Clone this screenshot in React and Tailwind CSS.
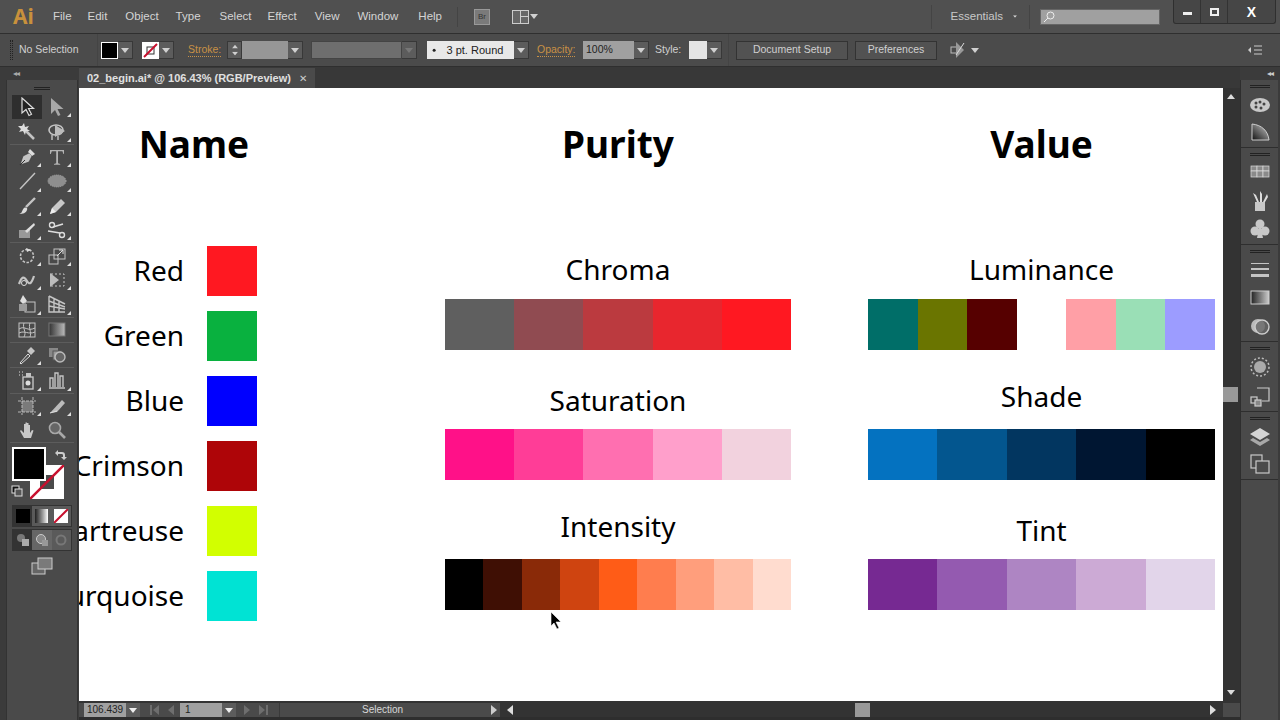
const G = "#c4c4c4";

function Caret({ className = "", color = "#d0d0d0" }) {
  return (
    <svg width="8" height="5" viewBox="0 0 8 5" className={className}>
      <path d="M0 0h8L4 5z" fill={color} />
    </svg>
  );
}

// little square + arrow dropdown next to the control bar fields
function Drop({ w = "w-[15px]", dim = false }) {
  return (
    <div className={`${w} h-[18px] flex items-center justify-center bg-[#5c5c5c] border border-[#383838] border-l-0`}>
      <Caret color={dim ? "#777" : "#d0d0d0"} />
    </div>
  );
}

const toolIcons = {
  select: <path d="M5 1v15l4-3.5 3 6 2.5-1.2-3-5.8h5z" fill="#222" stroke="#ddd" strokeWidth="1.2" />,
  direct: <path d="M4 1v16l4-4 3 6 2.500-1-3-6h6z" fill="#a8a8a8" />,
  wand: <g><path d="M9 9l8 8" stroke={G} strokeWidth="2.5" /><path d="M7 1l1 4 4-1-2 3 3 2-4 0-1 4-2-4-4 1 2-3-3-3 4 0z" fill="#ddd" /></g>,
  lasso: <g><ellipse cx="9" cy="8" rx="7" ry="5" fill="none" stroke={G} strokeWidth="1.6" /><path d="M8 3l10 6-10 6z" fill="#bbb" /><path d="M5 13v5M11 14v4" stroke={G} strokeWidth="1.4" /></g>,
  pen: <g><path d="M3 18l3-9 6-3 3 3-3 6z" fill={G} stroke="#333" strokeWidth=".6" /><path d="M11 5l2-3 5 5-3 2z" fill="#ddd" /><path d="M3 18l5-5" stroke="#333" /></g>,
  type: <path d="M3 3h14v4h-.6l-1-2.800h-4.400v12l2.200.8v.8H7v-.8l2.200-.8v-12H4.800l-1 2.800H3z" fill="#b4b4b4" />,
  line: <path d="M3 18L18 2" stroke={G} strokeWidth="1.4" />,
  ellipse: <ellipse cx="10" cy="10" rx="9" ry="6" fill="#8e8e8e" stroke="#aaa" strokeDasharray="1 1" />,
  brush: <g><path d="M9 11L18 2" stroke={G} strokeWidth="2.4" /><path d="M2 18c3 0 3-4 5-6 2-1 4 0 3 2-1 3-4 4-8 4z" fill="#ddd" /></g>,
  pencil: <g><path d="M3 18l2-6 9-9 4 4-9 9z" fill="#c8c8c8" /><path d="M3 18l2-6 4 4z" fill="#eee" /></g>,
  blob: <g><path d="M2 10h11v8H2z" fill="#999" /><path d="M8 11l9-8 1 2-8 8z" fill="#ddd" /></g>,
  scissors: <g><circle cx="5" cy="5" r="2.500" fill="none" stroke="#ddd" strokeWidth="1.4" /><circle cx="15" cy="15" r="2.500" fill="none" stroke="#ddd" strokeWidth="1.4" /><path d="M6 7l10-3M1 11l12 2" stroke="#ddd" strokeWidth="1.6" /></g>,
  rotate: <g><circle cx="10" cy="10" r="6.500" fill="none" stroke={G} strokeWidth="1.6" strokeDasharray="2.500 1.500" /><path d="M9 2l5 2-4 2z" fill="#ddd" /></g>,
  scale: <g><rect x="2" y="9" width="9" height="9" fill="none" stroke={G} /><rect x="7" y="3" width="11" height="10" fill="none" stroke={G} /><path d="M10 10l6-6M12 4h4v4" fill="none" stroke="#ddd" /></g>,
  warp: <g><path d="M2 14c3-8 5-8 8-3s5 1 7-5" fill="none" stroke={G} strokeWidth="2.2" /><circle cx="7" cy="13" r="2.500" fill="#444" stroke="#ddd" /></g>,
  free: <g><rect x="4" y="4" width="13" height="12" fill="none" stroke={G} strokeDasharray="2 2" /><path d="M3 3l9 7-9 7z" fill="#bbb" /></g>,
  shape: <g><rect x="8" y="8" width="10" height="10" fill="none" stroke={G} /><rect x="2" y="10" width="8" height="7" fill="#999" /><path d="M6 1l4 6-4 3-3-3z" fill="#ddd" /></g>,
  grid: <path d="M2 2v16h16M2 2l16 8M2 7l16 6M2 12l16 3M7 4v14M12 7v11" fill="none" stroke={G} strokeWidth="1.4" />,
  mesh: <g><rect x="2" y="3" width="16" height="14" fill="none" stroke={G} /><path d="M2 9c6-4 8 3 16-1M2 13c6-3 9 2 16-1M7 3c-2 5 3 9 0 14M13 3c-2 5 2 9 0 14" fill="none" stroke={G} /></g>,
  gradient: <g><defs><linearGradient id="tg"><stop offset="0" stopColor="#333" /><stop offset="1" stopColor="#bbb" /></linearGradient></defs><rect x="2" y="3" width="16" height="13" fill="url(#tg)" stroke="#777" /></g>,
  dropper: <g><path d="M3 18l8-9 2 2-9 8z" fill="none" stroke="#ddd" /><path d="M10 6l4-4 4 4-4 4z" fill={G} /></g>,
  blend: <g><rect x="2" y="3" width="9" height="9" fill="#888" /><rect x="6" y="6" width="9" height="9" fill="#999" stroke="#555" /><circle cx="13" cy="12" r="5" fill="#666" stroke="#bbb" strokeWidth="1.4" /></g>,
  spray: <g><rect x="6" y="7" width="10" height="12" fill="none" stroke={G} strokeWidth="1.4" /><circle cx="11" cy="13" r="2.500" fill="#ddd" /><rect x="9" y="3" width="5" height="4" fill={G} /><path d="M2 2h1M5 2h1M2 5h1M5 5h1" stroke="#ddd" /></g>,
  graph: <path d="M2 18h16M3 17V8h3v9M8 17V3h3v14M13 17V6h3v11" fill="none" stroke={G} strokeWidth="1.4" />,
  artboard: <g><rect x="5" y="5" width="11" height="11" fill="#7a7a7a" /><path d="M1 5h18M1 16h18M5 1v18M16 1v18" stroke={G} strokeWidth=".9" strokeDasharray="3 1" fill="none" /></g>,
  slice: <g><path d="M3 17L15 4l3 3-8 9z" fill="#bbb" /><path d="M3 17l7-2" stroke="#ddd" /></g>,
  hand: <path d="M7 18L3 11l1-1 3 3V4h1.500v6V2.500H10V10V3h1.500v7V5H13v8l2-3 1.500.5-2.500 7.500z" fill="#c8c8c8" />,
  zoom: <g><circle cx="8" cy="8" r="5.500" fill="#666" stroke="#a8a8a8" strokeWidth="1.6" /><path d="M12 12l6 6" stroke="#a8a8a8" strokeWidth="2.6" /></g>,
};

const toolGroups = [
  [["select", "direct"], ["wand", "lasso"]],
  [["pen", "type"], ["line", "ellipse"], ["brush", "pencil"], ["blob", "scissors"]],
  [["rotate", "scale"], ["warp", "free"], ["shape", "grid"]],
  [["mesh", "gradient"]],
  [["dropper", "blend"]],
  [["spray", "graph"]],
  [["artboard", "slice"], ["hand", "zoom"]],
];

const noFlyout = ["select", "wand", "mesh", "gradient", "zoom", "blend", "hand"];

function Tool({ name }) {
  const active = name === "select";
  return (
    <div className={`relative flex-1 h-full flex items-center justify-center ${active ? "bg-[#2e2e2e]" : ""}`}>
      <svg width="20" height="20" viewBox="0 0 20 20">{toolIcons[name]}</svg>
      {!noFlyout.includes(name) && (
        <svg width="4" height="4" viewBox="0 0 4 4" className="absolute right-[1px] bottom-[2px]">
          <path d="M4 0v4H0z" fill="#ddd" />
        </svg>
      )}
    </div>
  );
}

function LeftTools() {
  return (
    <div className="w-[79px] shrink-0 flex flex-col bg-[#3b3b3b] pl-[6px] pr-[1px]">
      <div className="h-[13px] flex items-center pl-[7px]">
        <span className="text-[#aaa] text-[8px] leading-none tracking-[-1px]">◂◂</span>
      </div>
      <div className="flex-1 bg-[#4a4a4a] border-x border-[#333] flex flex-col pt-[2px]">
        <div className="h-[13px] flex justify-center items-center">
          <div className="w-[16px] h-[3px] border-y border-[#222]"></div>
        </div>
        {toolGroups.map((group, i) => (
          <div key={i} className="border-b border-[#5c5c5c] mx-[3px]">
            {group.map((row) => (
              <div key={row[0]} className="flex h-[24.400px] px-[2px]">
                <Tool name={row[0]} />
                <Tool name={row[1]} />
              </div>
            ))}
          </div>
        ))}

        {/* fill and stroke */}
        <div className="relative h-[62px] shrink-0">
          <div className="absolute left-[5px] top-[4px] w-[34px] h-[34px] bg-black border-2 border-white z-10"></div>
          <div className="absolute left-[23px] top-[22px] w-[34px] h-[34px] bg-white overflow-hidden">
            <div className="absolute left-[10px] top-[10px] w-[14px] h-[14px] bg-[#4a4a4a]"></div>
            <svg width="34" height="34" viewBox="0 0 34 34" className="absolute left-0 top-0">
              <path d="M0 34L34 0" stroke="#c8102e" strokeWidth="2.500" />
            </svg>
          </div>
          <svg width="14" height="14" viewBox="0 0 14 14" className="absolute left-[46px] top-[5px]">
            <path d="M2 5l3-3v2h4c2 0 3 1 3 3v2h2l-3 3-3-3h2V7c0-1-1-1-2-1H5v2z" fill="#ccc" />
          </svg>
          <svg width="12" height="12" viewBox="0 0 12 12" className="absolute left-[4px] top-[42px]">
            <rect x="1" y="1" width="7" height="7" fill="#111" stroke="#ddd" />
            <rect x="4" y="4" width="7" height="7" fill="#555" stroke="#ddd" />
          </svg>
        </div>

        <div className="mx-[5px] h-[22px] flex bg-[#3c3c3c] border border-[#333]">
          <div className="flex-1 bg-[#333] flex items-center justify-center"><div className="w-[14px] h-[14px] bg-black"></div></div>
          <div className="flex-1 bg-[#5a5a5a] flex items-center justify-center"><div className="w-[13px] h-[14px] bg-gradient-to-r from-[#222] to-white"></div></div>
          <div className="flex-1 bg-[#5a5a5a] flex items-center justify-center">
            <svg width="14" height="14" viewBox="0 0 14 14"><rect width="14" height="14" fill="#fff" /><path d="M0 14L14 0" stroke="#c8102e" strokeWidth="2" /></svg>
          </div>
        </div>
        <div className="mx-[5px] mt-[2px] h-[22px] flex border border-[#333]">
          <div className="flex-1 bg-[#333] flex items-center justify-center"><svg width="14" height="14" viewBox="0 0 14 14"><circle cx="5" cy="5" r="4" fill="#777" /><rect x="6" y="6" width="7" height="7" fill="#aaa" /></svg></div>
          <div className="flex-1 bg-[#666] flex items-center justify-center"><svg width="14" height="14" viewBox="0 0 14 14"><circle cx="6" cy="6" r="4.500" fill="#888" stroke="#ccc" /><rect x="7" y="7" width="6" height="6" fill="#999" /></svg></div>
          <div className="flex-1 bg-[#5a5a5a] flex items-center justify-center"><svg width="14" height="14" viewBox="0 0 14 14"><circle cx="7" cy="7" r="4.500" fill="none" stroke="#777" strokeWidth="2" /></svg></div>
        </div>
        <div className="flex justify-center mt-[6px]">
          <svg width="22" height="18" viewBox="0 0 22 18">
            <rect x="1" y="6" width="13" height="11" fill="#666" stroke="#ccc" />
            <rect x="7" y="1" width="14" height="11" fill="#7a7a7a" stroke="#ccc" />
          </svg>
        </div>
      </div>
    </div>
  );
}

const panelIcons = {
  palette: <g><ellipse cx="11" cy="11" rx="10" ry="7" fill="#c8c8c8" /><circle cx="7" cy="9" r="1.500" fill="#444" /><circle cx="11" cy="8" r="1.500" fill="#444" /><circle cx="15" cy="10" r="1.500" fill="#444" /><circle cx="7" cy="13" r="1.500" fill="#444" /><circle cx="12" cy="14" r="1.500" fill="#444" /></g>,
  guide: <g><defs><linearGradient id="pg" x1="0" y1="1" x2="1" y2="0"><stop offset="0" stopColor="#111" /><stop offset="1" stopColor="#ccc" /></linearGradient></defs><path d="M3 19V3c10 1 16 7 17 16z" fill="url(#pg)" stroke="#ccc" /></g>,
  swatches: <g fill="#8a8a8a" stroke="#ddd" strokeWidth=".7"><rect x="2" y="4" width="6" height="5" /><rect x="8" y="4" width="6" height="5" /><rect x="14" y="4" width="6" height="5" /><rect x="2" y="9" width="6" height="6" /><rect x="8" y="9" width="6" height="6" /><rect x="14" y="9" width="6" height="6" /></g>,
  brushes: <g><path d="M6 12h10v9H6z" fill="#c8c8c8" /><path d="M8 12L4 3l3 2 3 7zM11 12V1l2 3v8zM14 12l4-8 1 3-3 5z" fill="#ddd" /></g>,
  club: <g fill="#c8c8c8"><circle cx="11" cy="6" r="4.500" /><circle cx="6" cy="13" r="4.500" /><circle cx="16" cy="13" r="4.500" /><path d="M10 10h2l2 10H8z" /></g>,
  stroke: <g fill="#c4c4c4"><rect x="2" y="4" width="18" height="1" /><rect x="2" y="9" width="18" height="2" /><rect x="2" y="15" width="18" height="3" /></g>,
  grad: <g><defs><linearGradient id="pb"><stop offset="0" stopColor="#222" /><stop offset="1" stopColor="#ccc" /></linearGradient></defs><rect x="2" y="4" width="18" height="13" fill="url(#pb)" stroke="#ccc" /></g>,
  transp: <g><circle cx="9" cy="11" r="7" fill="#bbb" /><circle cx="13" cy="12" r="7" fill="#666" fillOpacity=".8" stroke="#ccc" strokeWidth="1.400" /></g>,
  appear: <g><circle cx="11" cy="11" r="6" fill="#aaa" /><circle cx="11" cy="11" r="9" fill="none" stroke="#bbb" strokeWidth="1.500" strokeDasharray="2 2" /></g>,
  align: <g fill="none" stroke="#ccc"><path d="M8 3h12v13H13" strokeWidth="1.200" /><rect x="2" y="12" width="6" height="6" strokeWidth="1.200" /><rect x="6" y="15" width="6" height="6" fill="#888" strokeWidth="1.200" /></g>,
  layers: <g><path d="M11 2l10 6-10 6L1 8z" fill="#d4d4d4" /><path d="M4 12l7 4 7-4 3 2-10 6-10-6z" fill="#a8a8a8" /></g>,
  artboards: <g fill="none" stroke="#c8c8c8" strokeWidth="1.200"><rect x="2" y="2" width="11" height="13" /><rect x="7" y="8" width="13" height="12" fill="#4a4a4a" /></g>,
};

const panelGroups = [
  { h: "h-[68px]", icons: ["palette", "guide"] },
  { h: "h-[97px]", icons: ["swatches", "brushes", "club"] },
  { h: "h-[97px]", icons: ["stroke", "grad", "transp"] },
  { h: "h-[70px]", icons: ["appear", "align"] },
  { h: "h-[68px]", icons: ["layers", "artboards"] },
];

function RightPanel() {
  return (
    <div className="w-[40px] shrink-0 flex flex-col bg-[#3b3b3b] pr-[2px]">
      <div className="h-[13px] flex items-center justify-end pr-[5px]">
        <span className="text-[#ccc] text-[8px] leading-none tracking-[-1px]">◂◂</span>
      </div>
      <div className="flex-1 bg-[#4a4a4a] border-l border-[#2e2e2e] flex flex-col">
        {panelGroups.map((g, i) => (
          <div key={i} className={`${g.h} shrink-0 border-b border-[#2e2e2e] flex flex-col items-center pt-[3px]`}>
            <div className="w-[20px] h-[3px] border-y border-[#222] mt-[2px] mb-[3px]"></div>
            <div className="flex-1 flex flex-col justify-around pb-[1px]">
              {g.icons.map((n) => (
                <svg key={n} width="22" height="22" viewBox="0 0 22 22">{panelIcons[n]}</svg>
              ))}
            </div>
          </div>
        ))}
      </div>
    </div>
  );
}

function MenuBar() {
  const items = [
    ["File", "ml-[21px]"], ["Edit", "ml-[16px]"], ["Object", "ml-[18px]"], ["Type", "ml-[17px]"], ["Select", "ml-[19px]"],
    ["Effect", "ml-[16px]"], ["View", "ml-[18px]"], ["Window", "ml-[18px]"], ["Help", "ml-[20px]"],
  ];
  return (
    <div className="h-[34px] shrink-0 flex items-center bg-[#505050] border-b border-[#2f2f2f] relative text-[#d4d4d4] text-[11.500px]">
      <span className="ml-[13px] w-[19px] text-[21px] font-bold leading-none text-[#c8913c] font-['Noto_Sans',sans-serif]">Ai</span>
      {items.map(([t, m]) => (
        <span key={t} className={m}>{t}</span>
      ))}
      <div className="ml-[15px] h-[20px] border-l border-[#444]"></div>
      <div className="ml-[16px] w-[16px] h-[16px] bg-[#7a7a7a] border border-[#999] text-[8px] text-[#333] flex items-center justify-center">Br</div>
      <div className="ml-[22px] w-[17px] h-[14px] grid grid-cols-2 gap-[1px] border border-[#ccc] bg-[#ccc]">
        <div className="bg-[#666] row-span-2"></div>
        <div className="bg-[#666]"></div>
        <div className="bg-[#666]"></div>
      </div>
      <Caret className="ml-[1px]" />
      <div className="flex-1"></div>
      <div className="h-[24px] border-l border-[#444] mr-[19px]"></div>
      <span className="text-[#c8c8c8]">Essentials</span>
      <Caret className="ml-[8px] scale-50" />
      <div className="ml-[10px] h-[24px] border-l border-[#444]"></div>
      <div className="ml-[10px] w-[120px] h-[16px] bg-[#a0a0a0] border border-[#666] flex items-center pl-[1px]">
        <svg width="14" height="14" viewBox="0 0 14 14"><circle cx="8.500" cy="5.500" r="3.500" fill="none" stroke="#eee" /><path d="M6 8l-4 4" stroke="#eee" /></svg>
      </div>
      <div className="ml-[13px] mr-[4px] w-[103px] h-[24px] -mt-[9px] flex border border-[#2f2f2f] border-t-0 rounded-b-[3px] bg-[#464646]">
        <div className="w-[27px] flex items-center justify-center border-r border-[#333]"><div className="w-[9px] h-[3px] bg-[#eee] mt-[3px]"></div></div>
        <div className="w-[27px] flex items-center justify-center border-r border-[#333]"><div className="w-[9px] h-[8px] border-2 border-[#eee]"></div></div>
        <div className="flex-1 flex items-center justify-center text-white font-bold text-[14px] leading-none">X</div>
      </div>
    </div>
  );
}

function ControlBar() {
  return (
    <div className="h-[33px] shrink-0 flex items-center bg-[#4b4b4b] border-b border-[#2f2f2f] text-[#d0d0d0] text-[10.500px] whitespace-nowrap">
      <div className="ml-[10px] w-[3px] h-[20px] border-x border-dotted border-[#222]"></div>
      <span className="ml-[6px] w-[60px]">No Selection</span>
      <div className="ml-[18px] h-[32px] border-l border-[#444]"></div>
      <div className="ml-[3px] w-[17px] h-[17px] bg-black border border-white"></div>
      <Drop w="w-[15px]" />
      <div className="ml-[9px] w-[17px] h-[17px] bg-white flex items-center justify-center">
        <svg width="15" height="15" viewBox="0 0 15 15"><rect x="4" y="4" width="7" height="7" fill="none" stroke="#333" /><path d="M1 14L14 1" stroke="#c8102e" strokeWidth="2" /></svg>
      </div>
      <Drop w="w-[15px]" />
      <span className="ml-[14px] w-[33px] text-[#c89146] border-b border-dotted border-[#c89146] leading-[13px]">Stroke:</span>
      <div className="ml-[6px] w-[15px] h-[18px] bg-[#5c5c5c] border border-[#383838] flex flex-col items-center justify-center gap-[2px]">
        <Caret className="rotate-180 scale-75" />
        <Caret className="scale-75" />
      </div>
      <div className="w-[46px] h-[18px] bg-[#969696]"></div>
      <Drop w="w-[15px]" />
      <div className="ml-[8px] w-[91px] h-[18px] bg-[#6e6e6e] border border-[#444]"></div>
      <Drop w="w-[15px]" dim />
      <div className="ml-[10px] w-[87px] h-[18px] bg-[#e8e8e8] text-[#222] flex items-center">
        <span className="ml-[6px] w-[1.500px] h-[1.500px] bg-[#222] rounded-full scale-150"></span>
        <span className="ml-[12px] text-[11px]">3 pt. Round</span>
      </div>
      <Drop w="w-[15px]" />
      <span className="ml-[8px] w-[38px] text-[#c89146] border-b border-dotted border-[#c89146] leading-[13px]">Opacity:</span>
      <div className="ml-[8px] w-[51px] h-[18px] bg-[#a0a0a0] text-[#222] flex items-center pl-[3px]">100%</div>
      <Drop w="w-[15px]" />
      <span className="ml-[6px] w-[28px]">Style:</span>
      <div className="ml-[6px] w-[18px] h-[18px] bg-[#e4e4e4]"></div>
      <Drop w="w-[15px]" />
      <div className="ml-[6px] h-[32px] border-l border-[#444]"></div>
      <div className="ml-[7px] w-[112px] h-[19px] bg-[#525252] border border-[#333] flex items-center justify-center">Document Setup</div>
      <div className="ml-[7px] w-[82px] h-[19px] bg-[#525252] border border-[#333] flex items-center justify-center">Preferences</div>
      <svg width="17" height="18" viewBox="0 0 17 18" className="ml-[13px]">
        <rect x="1" y="6" width="6" height="6" fill="none" stroke="#bbb" />
        <path d="M6 1l8 8-8 8z" fill="#999" />
        <path d="M14 2L6 14" stroke="#ddd" />
      </svg>
      <Caret className="ml-[4px]" />
      <div className="flex-1"></div>
      <svg width="14" height="10" viewBox="0 0 14 10" className="mr-[18px]">
        <path d="M6 1h8M6 5h8M6 9h8" stroke="#ccc" />
        <path d="M0 5l3-3v6z" fill="#ccc" />
      </svg>
    </div>
  );
}

const heading = "text-[37px] font-bold leading-[50px] text-black text-center pt-[31px] h-[132px]";
const label = "text-[28px] leading-[40px] text-black text-center";

const nameRows = [
  ["Red", "bg-[#ff1821]"],
  ["Green", "bg-[#09b13f]"],
  ["Blue", "bg-[#0000ff]"],
  ["Crimson", "bg-[#ae0508]"],
  ["Chartreuse", "bg-[#d2ff00]"],
  ["Turquoise", "bg-[#00e3d4]"],
];

const purity = [
  { title: "Chroma", pb: "pb-[10px]", cols: ["bg-[#5f5f5f]", "bg-[#904b51]", "bg-[#bb3a3f]", "bg-[#e8262e]", "bg-[#ff1821]"] },
  { title: "Saturation", pb: "pb-[9px]", cols: ["bg-[#ff1188]", "bg-[#ff3d97]", "bg-[#ff6fb0]", "bg-[#ff9fcb]", "bg-[#f2d2de]"] },
  { title: "Intensity", pb: "pb-[13px]", cols: ["bg-[#000000]", "bg-[#3f0f04]", "bg-[#8a2a08]", "bg-[#cf4410]", "bg-[#ff5c17]", "bg-[#ff7d4e]", "bg-[#ff9e7c]", "bg-[#ffbda5]", "bg-[#ffdccf]"] },
];

const value = [
  { title: "Luminance", pb: "pb-[10px]", cols: ["bg-[#006e68]", "bg-[#6a7500]", "bg-[#560000]", "bg-white", "bg-[#ff9fa6]", "bg-[#9adfb6]", "bg-[#9c9cff]"] },
  { title: "Shade", pb: "pb-[13px]", cols: ["bg-[#0472c0]", "bg-[#03568f]", "bg-[#023660]", "bg-[#001632]", "bg-[#000000]"] },
  { title: "Tint", pb: "pb-[9px]", cols: ["bg-[#762992]", "bg-[#945ab0]", "bg-[#ae85c3]", "bg-[#ccaad5]", "bg-[#e2d5ea]"] },
];

function Strips({ rows }) {
  return rows.map((r) => (
    <div key={r.title}>
      <div className={`h-[79px] flex items-end justify-center ${r.pb}`}>
        <div className={label}>{r.title}</div>
      </div>
      <div className="flex h-[51px]">
        {r.cols.map((c) => (
          <div key={c} className={`flex-1 ${c}`}></div>
        ))}
      </div>
    </div>
  ));
}

function Artboard() {
  return (
    <div className="relative flex-1 bg-white overflow-hidden flex font-['Noto_Sans',sans-serif]">
      <div className="w-[230px] shrink-0">
        <div className={heading}>Name</div>
        <div className="mt-[26px] flex flex-col gap-[15px]">
          {nameRows.map(([n, c]) => (
            <div key={n} className="flex items-center h-[50px]">
              <div className="w-[105px] mb-[3px] flex justify-end whitespace-nowrap text-[28px] leading-[40px] text-black">{n}</div>
              <div className={`ml-[23px] w-[50px] h-[50px] ${c}`}></div>
            </div>
          ))}
        </div>
      </div>
      <div className="ml-[136px] w-[346px] shrink-0">
        <div className={heading}>Purity</div>
        <Strips rows={purity} />
      </div>
      <div className="ml-[77px] w-[347px] shrink-0">
        <div className={heading}>Value</div>
        <Strips rows={value} />
      </div>
      {/* mouse pointer */}
      <svg width="12" height="19" viewBox="0 0 12 19" className="absolute left-[471px] top-[523px]">
        <path d="M1 1v14l3-3 3 6 2-1-3-6h5z" fill="#000" stroke="#fff" strokeWidth=".6" />
      </svg>
    </div>
  );
}

function VScroll() {
  return (
    <div className="w-[17px] shrink-0 bg-[#333] flex flex-col items-center">
      <Caret className="rotate-180 mt-[6px] -translate-x-[1px]" color="#ddd" />
      <div className="mt-[288px] w-[15px] h-[15px] bg-[#999] mr-[2px]"></div>
      <div className="flex-1"></div>
      <Caret className="mb-[6px] -translate-x-[1px]" color="#ddd" />
    </div>
  );
}

function StatusBar() {
  const Nav = ({ flip }) => (
    <svg width="28" height="10" viewBox="0 0 28 10" className={flip ? "rotate-180" : ""}>
      <path d="M3 0v10h2V0zM6 5l6-5v10zM21 5l6-5v10z" fill="#6e6e6e" />
    </svg>
  );
  return (
    <div className="h-[16px] shrink-0 flex bg-[#4a4a4a] border-t-2 border-[#333] text-[10px] text-[#d8d8d8] leading-none items-stretch">
      <div className="w-[421px] shrink-0 flex items-center">
        <div className="ml-[5px] w-[42px] h-full bg-[#a0a0a0] text-[#222] flex items-center pl-[3px]">106.439</div>
        <div className="w-[14px] h-full bg-[#5c5c5c] flex items-center justify-center"><Caret color="#eee" /></div>
        <div className="ml-[7px]"><Nav /></div>
        <div className="ml-[5px] w-[42px] h-full bg-[#a0a0a0] text-[#222] flex items-center pl-[5px]">1</div>
        <div className="w-[14px] h-full bg-[#5c5c5c] flex items-center justify-center"><Caret color="#eee" /></div>
        <div className="ml-[7px]"><Nav flip /></div>
        <div className="ml-[8px] h-full flex-1 border-l border-[#3a3a3a] flex items-center justify-between pr-[3px]">
          <span className="ml-[82px]">Selection</span>
          <svg width="6" height="10" viewBox="0 0 6 10"><path d="M0 0l6 5-6 5z" fill="#ccc" /></svg>
        </div>
      </div>
      <div className="flex-1 bg-[#333] flex items-center">
        <svg width="6" height="10" viewBox="0 0 6 10" className="ml-[7px]"><path d="M6 0L0 5l6 5z" fill="#ddd" /></svg>
        <div className="ml-[342px] w-[15px] h-full bg-[#999]"></div>
        <div className="flex-1"></div>
        <svg width="6" height="10" viewBox="0 0 6 10" className="mr-[7px]"><path d="M0 0l6 5-6 5z" fill="#ddd" /></svg>
      </div>
      <div className="w-[17px] bg-[#4a4a4a]"></div>
    </div>
  );
}

export default function App() {
  return (
    <div className="w-[1280px] h-[720px] overflow-hidden flex flex-col bg-[#333] font-['Liberation_Sans',sans-serif]">
      <MenuBar />
      <ControlBar />
      <div className="flex-1 flex min-h-0">
        <LeftTools />
        <div className="flex-1 flex flex-col min-w-0">
          <div className="h-[21px] shrink-0 bg-[#383838] flex items-end">
            <div className="w-[236px] h-[20px] bg-[#4a4a4a] flex items-center pl-[8px] text-[#e0e0e0] text-[11px] font-bold">
              <span>02_begin.ai* @ 106.43% (RGB/Preview)</span>
              <span className="ml-auto mr-[8px] text-[#ccc] text-[10px] font-normal">✕</span>
            </div>
          </div>
          <div className="flex-1 flex min-h-0">
            <Artboard />
            <VScroll />
          </div>
          <StatusBar />
          <div className="h-[3px] shrink-0 bg-[#2e2e2e]"></div>
        </div>
        <RightPanel />
      </div>
    </div>
  );
}
